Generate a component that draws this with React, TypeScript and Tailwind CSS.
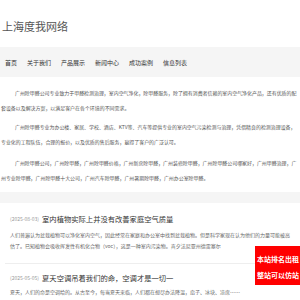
import React from "react";

const font = { fontFamily: '"Noto Sans CJK SC", "Noto Sans", sans-serif' };

export default function App() {
  const nav = ["首页", "关于我们", "产品展示", "新闻中心", "成功案例", "信息列表"];
  return (
    <div className="relative w-[300px] h-[300px] overflow-hidden bg-white" style={font}>
      <div className="h-[47px] flex items-center pl-[2px] pt-[4px]">
        <div className="text-[11px] leading-[12px] text-[#555]">上海度我网络</div>
      </div>
      <div className="h-[30px] bg-[#f5f5f5] flex items-center gap-[10px] pl-[5px] text-[6px] text-[#333]">
        {nav.map((n) => (
          <span key={n}>{n}</span>
        ))}
      </div>
      <div className="pt-[9px] pb-[7px] pl-[1px] text-[4.95px] leading-[14.5px] text-[#555]">
        <p className="indent-[14px] mb-[5px]">
          广州除甲醛公司专业致力于甲醛检测治理，室内空气净化，除甲醛服务，除了拥有消费者信赖的室内空气净化产品，还有优质的配套设备以及解决方案，以满足客户在各个环境的不同需求。
        </p>
        <p className="indent-[14px] mb-[7px]">
          广州除甲醛专业为办公楼、家居、学校、酒店、KTV等、汽车等提供专业的室内空气污染检测与治理，凭借精良的检测治理设备，专业化的工程队伍，合理的报价，以及优质的售后服务，赢得了客户的广泛认可。
        </p>
        <p className="indent-[14px]">
          广州除甲醛公司，广州除甲醛，广州除甲醛价格，广州新房除甲醛，广州装修除甲醛，广州除甲醛公司哪家好，广州甲醛治理，广州专业除甲醛，广州除甲醛十大公司，广州汽车除甲醛，广州暑期除甲醛，广州办公室除甲醛。
        </p>
      </div>
      <div className="h-[11px] bg-[#f5f5f5]" />
      <div className="px-[5px]">
        <div className="pt-[10px] pb-[12px] px-[5px] border-b border-[#eeeeee]">
          <div className="flex items-center leading-[12px]">
            <span className="text-[5px] text-[#999] mr-[3px]">(2025-08-03)</span>
            <span className="text-[7.3px] text-[#333]">室内植物实际上并没有改善家庭空气质量</span>
          </div>
          <p className="mt-[4px] text-[5px] leading-[11px] text-[#666]">
            人们普遍认为盆栽植物可以净化室内空气，因此经常在家庭和办公室中找到盆栽植物。但是科学家现在认为他们的力量可能被高估了。已知植物会吸收挥发性有机化合物（voc），这是一种室内污染物。宾夕法尼亚州德雷塞尔
          </p>
        </div>
        <div className="pt-[8px] px-[5px]">
          <div className="flex items-center leading-[12px]">
            <span className="text-[5px] text-[#999] mr-[3px]">(2025-05-05)</span>
            <span className="text-[7.3px] text-[#333]">夏天空调吊着我们的命，空调才是一切一</span>
          </div>
          <p className="mt-[2px] text-[5px] leading-[11px] text-[#666]">
            夏天，人们的命是空调给的。从古至今，每当夏天来临，人们都在想尽办法降温，扇子、冰块、凉席……
          </p>
        </div>
      </div>
      <div className="absolute left-[255px] top-[246px] w-[45px] h-[39px] bg-[#ff0000] pt-[5px] pl-[2px] overflow-hidden">
        <div className="text-[7px] leading-[16px] font-bold text-white whitespace-nowrap">本站排名出租</div>
        <div className="text-[7px] leading-[16px] font-bold text-white whitespace-nowrap">整站可以仿站</div>
      </div>
    </div>
  );
}
